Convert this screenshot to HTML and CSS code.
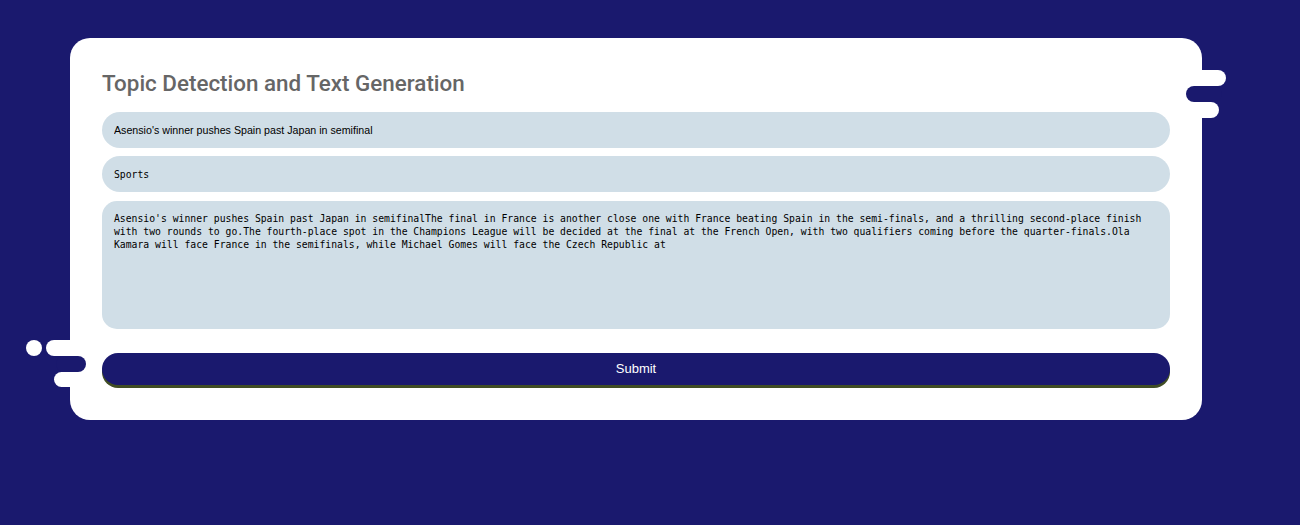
FILE: index.html
```html
<!DOCTYPE html>
<html>
<head>
<meta charset="utf-8">
<link rel="stylesheet" href="styles.css">
</head>
<body>
<main class="card">
  <span class="deco dot-l"></span>
  <span class="deco pill pill-l1"></span>
  <span class="deco notch notch-l"></span>
  <span class="deco pill pill-l2"></span>
  <span class="deco pill pill-r1"></span>
  <span class="deco notch notch-r"></span>
  <span class="deco pill pill-r2"></span>

  <h1 class="title">Topic Detection and Text Generation</h1>
  <form class="form">
    <input class="field field-title" type="text" value="Asensio's winner pushes Spain past Japan in semifinal">
    <input class="field field-topic" type="text" value="Sports">
    <textarea class="field field-body">Asensio's winner pushes Spain past Japan in semifinalThe final in France is another close one with France beating Spain in the semi-finals, and a thrilling second-place finish with two rounds to go.The fourth-place spot in the Champions League will be decided at the final at the French Open, with two qualifiers coming before the quarter-finals.Ola Kamara will face France in the semifinals, while Michael Gomes will face the Czech Republic at</textarea>
    <button class="submit" type="button">Submit</button>
  </form>
</main>
</body>
</html>
```

FILE: styles.css
```css
html, body {
  margin: 0;
  padding: 0;
}
body {
  background: #1a196e;
  width: 1300px;
  height: 525px;
  overflow: hidden;
}
.card {
  position: relative;
  box-sizing: border-box;
  width: 1132px;
  height: 382px;
  margin: 38px 0 0 70px;
  background: #ffffff;
  border-radius: 20px;
  padding: 32px 32px 0 32px;
}
.title {
  margin: 0;
  font-family: Roboto, "Liberation Sans", sans-serif;
  font-weight: 500;
  font-size: 22.4px;
  line-height: 26px;
  color: #666666;
}
.form {
  display: flex;
  flex-direction: column;
  margin-top: 16px;
}
.field {
  box-sizing: border-box;
  width: 100%;
  border: none;
  outline: none;
  background: #d0dee7;
  color: #000;
  margin: 0;
}
.field-title {
  height: 36px;
  border-radius: 18px;
  padding: 0 12px;
  font-family: "Liberation Sans", Arial, sans-serif;
  font-size: 10.67px;
}
.field-topic {
  height: 36px;
  border-radius: 18px;
  padding: 0 12px;
  margin-top: 8px;
  font-family: "DejaVu Sans Mono", monospace;
  font-size: 9.75px;
}
.field-body {
  display: block;
  height: 128px;
  margin-top: 9px;
  border-radius: 15px;
  padding: 11px 12px;
  font-family: "DejaVu Sans Mono", monospace;
  font-size: 9.75px;
  line-height: 13px;
  resize: none;
  overflow: hidden;
}
.submit {
  margin-top: 24px;
  height: 32px;
  padding: 0 0 2px 0;
  border: none;
  border-radius: 16px;
  background: #1a196e;
  color: #ffffff;
  font-family: "Liberation Sans", Arial, sans-serif;
  font-size: 13px;
  box-shadow: 0 3px 0 #404d24;
  cursor: pointer;
}
.deco {
  position: absolute;
  display: block;
}
.pill {
  background: #ffffff;
  border-radius: 8px;
}
.notch {
  background: #1a196e;
  border-radius: 9px;
}
.dot-l {
  left: -44px;
  top: 302px;
  width: 16px;
  height: 16px;
  border-radius: 50%;
  background: #ffffff;
}
.pill-l1 {
  left: -24px;
  top: 302px;
  width: 40px;
  height: 16px;
}
.notch-l {
  left: -14px;
  top: 318px;
  width: 30px;
  height: 16px;
}
.pill-l2 {
  left: -16px;
  top: 334px;
  width: 36px;
  height: 15px;
}
.pill-r1 {
  left: 1110px;
  top: 32px;
  width: 46px;
  height: 16px;
}
.notch-r {
  left: 1116px;
  top: 48px;
  width: 36px;
  height: 16px;
}
.pill-r2 {
  left: 1110px;
  top: 64px;
  width: 39px;
  height: 16px;
}
```
